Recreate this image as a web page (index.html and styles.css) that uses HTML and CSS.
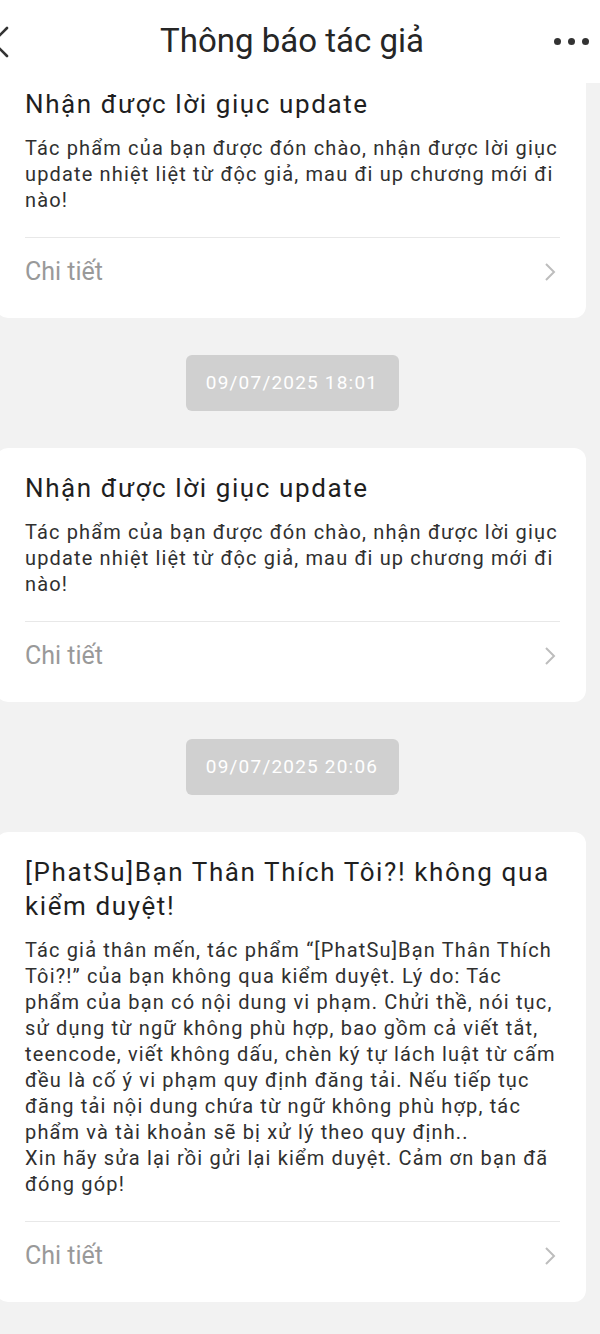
FILE: index.html
```html
<!DOCTYPE html>
<html>
<head>
  <meta charset="utf-8">
  <title>Thông báo tác giả</title>
  <link rel="stylesheet" href="styles.css">
</head>
<body>
  <div class="topbar">
    <div class="back">
      <svg width="22" height="34" viewBox="0 0 22 34"><path d="M18 3 L4 17 L18 31" fill="none" stroke="#333" stroke-width="2.6" stroke-linecap="round" stroke-linejoin="round"/></svg>
    </div>
    <h1 class="title">Thông báo tác giả</h1>
    <div class="more">
      <span></span><span></span><span></span>
    </div>
  </div>

  <div class="list">
    <div class="card first">
      <h2>Nhận được lời giục update</h2>
      <p>Tác phẩm của bạn được đón chào, nhận được lời giục update nhiệt liệt từ độc giả, mau đi up chương mới đi nào!</p>
      <div class="detail">
        <span>Chi tiết</span>
        <svg width="12" height="20" viewBox="0 0 12 20"><path d="M2 2 L10 10 L2 18" fill="none" stroke="#bdbdbd" stroke-width="2"/></svg>
      </div>
    </div>

    <div class="time"><span>09/07/2025 18:01</span></div>

    <div class="card">
      <h2>Nhận được lời giục update</h2>
      <p>Tác phẩm của bạn được đón chào, nhận được lời giục update nhiệt liệt từ độc giả, mau đi up chương mới đi nào!</p>
      <div class="detail">
        <span>Chi tiết</span>
        <svg width="12" height="20" viewBox="0 0 12 20"><path d="M2 2 L10 10 L2 18" fill="none" stroke="#bdbdbd" stroke-width="2"/></svg>
      </div>
    </div>

    <div class="time"><span>09/07/2025 20:06</span></div>

    <div class="card">
      <h2>[PhatSu]Bạn Thân Thích Tôi?! không qua kiểm duyệt!</h2>
      <p>Tác giả thân mến, tác phẩm “[PhatSu]Bạn Thân Thích Tôi?!” của bạn không qua kiểm duyệt. Lý do: Tác phẩm của bạn có nội dung vi phạm. Chửi thề, nói tục, sử dụng từ ngữ không phù hợp, bao gồm cả viết tắt, teencode, viết không dấu, chèn ký tự lách luật từ cấm đều là cố ý vi phạm quy định đăng tải. Nếu tiếp tục đăng tải nội dung chứa từ ngữ không phù hợp, tác phẩm và tài khoản sẽ bị xử lý theo quy định..<br>Xin hãy sửa lại rồi gửi lại kiểm duyệt. Cảm ơn bạn đã đóng góp!</p>
      <div class="detail">
        <span>Chi tiết</span>
        <svg width="12" height="20" viewBox="0 0 12 20"><path d="M2 2 L10 10 L2 18" fill="none" stroke="#bdbdbd" stroke-width="2"/></svg>
      </div>
    </div>
  </div>
</body>
</html>
```

FILE: styles.css
```css
/* Page */
body {
  margin: 0;
  background-color: #f2f2f2;
  font-family: Roboto, "Noto Sans", sans-serif;
  color: #333;
  overflow: hidden;
}

/* Top bar */
.topbar {
  margin-left: -16px;
  height: 83px;
  background-color: #fff;
  display: grid;
  grid-template-columns: 60px 1fr 60px;
  align-items: center;
}

.back {
  display: flex;
  margin-left: 5px;
}

.title {
  margin: -2px 0 0;
  text-align: center;
  font-size: 33px;
  font-weight: 400;
  color: #262626;
}

.more {
  display: flex;
  gap: 7px;
  justify-content: center;
  margin-left: 2px;
}

.more span {
  width: 7px;
  height: 7px;
  border-radius: 50%;
  background-color: #333;
}

/* Cards */
.list {
  margin-left: -4px;
  margin-right: 14px;
  padding-bottom: 40px;
}

.card {
  background-color: #fff;
  border-radius: 12px;
  padding: 23px 26px 0 29px;
}

.card.first {
  border-radius: 0 0 12px 12px;
  padding-top: 4px;
}

.card h2 {
  margin: 0;
  font-size: 26px;
  line-height: 34px;
  letter-spacing: 1.6px;
  font-weight: 400;
  color: #1f1f1f;
}

.card p {
  margin: 14px 0 0;
  font-size: 20px;
  line-height: 26px;
  letter-spacing: 1.15px;
  color: #303030;
}

.detail {
  margin-top: 24px;
  border-top: 1px solid #e8e8e8;
  display: flex;
  justify-content: space-between;
  align-items: center;
  padding: 20px 4px 32px 0;
}

.detail span {
  font-size: 25px;
  line-height: 28px;
  color: #999;
}

/* Time stamps */
.time {
  display: flex;
  justify-content: center;
  padding: 37px 0;
  margin-right: -14px;
}

.time span {
  width: 213px;
  height: 56px;
  margin-left: -12px;
  line-height: 56px;
  text-align: center;
  background-color: #d0d0d0;
  border-radius: 6px;
  color: #fff;
  font-size: 19px;
  letter-spacing: 1.2px;
}
```
